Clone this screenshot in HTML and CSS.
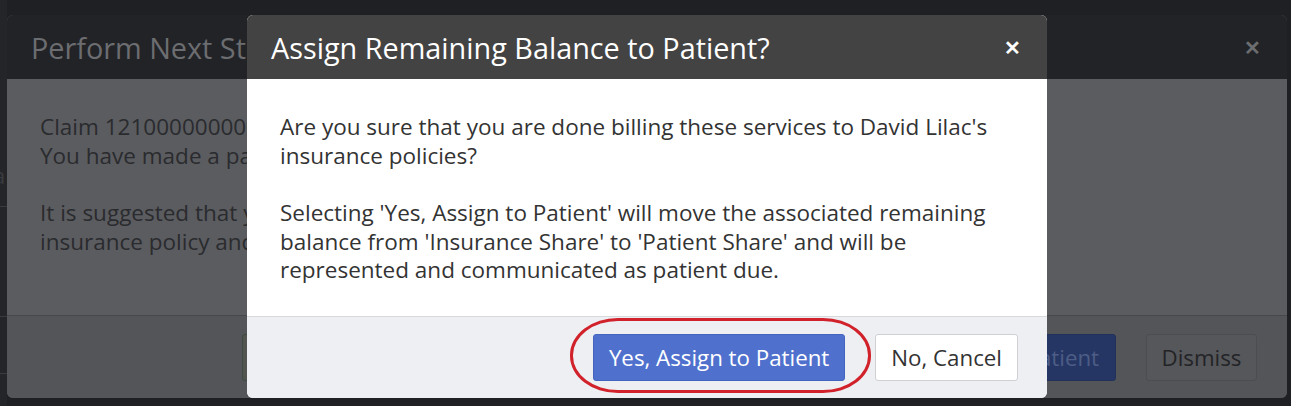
FILE: index.html
```html
<!DOCTYPE html>
<html lang="en">
<head>
<meta charset="utf-8">
<title>Assign Remaining Balance</title>
<link rel="stylesheet" href="styles.css">
</head>
<body>
<div class="page">
  <div class="page-strip">
    <span class="strip-a">a</span>
    <span class="strip-line l1"></span>
    <span class="strip-line l2"></span>
    <span class="strip-line l3"></span>
  </div>
  <div class="back-modal">
    <div class="back-header">
      <span class="back-title">Perform Next Step</span>
      <span class="back-close">&#x2715;</span>
    </div>
    <div class="back-body">
      <p>Claim 121000000000 has been processed.<br>You have made a payment posting on this claim.</p>
      <p>It is suggested that you bill the remaining balance to David Lilac's next<br>insurance policy and assign anything else to patient.</p>
    </div>
    <div class="back-footer">
      <button class="back-btn back-btn-left">Bill Next Insurance</button>
      <span class="spacer"></span>
      <button class="back-btn back-btn-primary">Assign to Patient</button>
      <button class="back-btn back-btn-default">Dismiss</button>
    </div>
  </div>

  <div class="modal">
    <div class="modal-header">
      <h1 class="modal-title">Assign Remaining Balance to Patient?</h1>
      <span class="modal-close">&#x2715;</span>
    </div>
    <div class="modal-body">
      <p>Are you sure that you are done billing these services to David Lilac's insurance policies?</p>
      <p>Selecting 'Yes, Assign to Patient' will move the associated remaining balance from 'Insurance Share' to 'Patient Share' and will be represented and communicated as patient due.</p>
    </div>
    <div class="modal-footer">
      <button class="btn btn-primary">Yes, Assign to Patient</button>
      <button class="btn btn-default">No, Cancel</button>
    </div>
  </div>

  <div class="annotation"></div>
</div>
</body>
</html>
```

FILE: styles.css
```css
* { box-sizing: border-box; }

html, body {
  margin: 0;
  padding: 0;
  background: #1f2023;
  font-family: "Open Sans", "Liberation Sans", sans-serif;
}

.page {
  position: relative;
  width: 1291px;
  height: 406px;
  overflow: hidden;
  display: flex;
  background: #1f2023;
}

.page-strip {
  position: relative;
  width: 7px;
  flex: none;
  background: #242528;
}
.strip-a {
  position: absolute;
  left: -7px;
  top: 160px;
  color: #3a3b3e;
  font-size: 22px;
}
.strip-line {
  position: absolute;
  left: 0;
  width: 7px;
  height: 1px;
  background: #3a3b3e;
}
.strip-line.l1 { top: 206px; }
.strip-line.l2 { top: 316px; }
.strip-line.l3 { top: 373px; }

/* background (dimmed) modal */
.back-modal {
  margin: 15px 4px 8px 0;
  flex: 1;
  display: flex;
  flex-direction: column;
  border-radius: 6px;
  overflow: hidden;
  background: #5b5c60;
}
.back-header {
  height: 64px;
  background: #222327;
  display: flex;
  align-items: center;
  padding: 0 26px 0 24px;
}
.back-title {
  flex: 1;
  font-size: 28.8px;
  color: #6c6d70;
  white-space: nowrap;
}
.back-close {
  font-size: 20px;
  font-weight: bold;
  color: #6c6d70;
}
.back-body {
  flex: 1;
  padding: 34px 33px 0;
  color: #2a2b2e;
  font-size: 22.5px;
  line-height: 28.5px;
}
.back-body p { margin: 0 0 29px; white-space: nowrap; }

.back-footer {
  height: 83px;
  border-top: 1px solid #47484b;
  background: #545558;
  display: flex;
  align-items: center;
  padding: 0 30px 0 235px;
  gap: 30px;
}
.spacer { flex: 1; }
.back-btn {
  height: 47px;
  font-family: inherit;
  font-size: 22.3px;
  padding: 0 16px;
  border-radius: 3px;
  border: 1px solid #4c4d50;
  background: #56575a;
  color: #232427;
}
.back-btn-default {
  padding: 0 14.5px;
}
.back-btn-left {
  border-color: #3e4a44;
  background: #52544f;
}
.back-btn-primary {
  background: #253664;
  border-color: #22315a;
  color: #4d5d86;
}

/* front modal */
.modal {
  position: absolute;
  left: 247px;
  top: 15px;
  width: 800px;
  height: 383px;
  border-radius: 6px;
  overflow: hidden;
  display: flex;
  flex-direction: column;
  background: #ffffff;
}
.modal-header {
  height: 64px;
  background: #434343;
  display: flex;
  align-items: center;
  padding: 0 26px 0 24px;
}
.modal-title {
  flex: 1;
  margin: 0;
  font-size: 28.8px;
  font-weight: normal;
  color: #ffffff;
  white-space: nowrap;
}
.modal-close {
  font-size: 20px;
  font-weight: bold;
  color: #ffffff;
}
.modal-body {
  flex: 1;
  padding: 34px 40px 0 33px;
  color: #333333;
  font-size: 22.5px;
  line-height: 28.5px;
}
.modal-body p { margin: 0 0 29px; }

.modal-footer {
  height: 82px;
  border-top: 1px solid #d8d9dc;
  background: #eeeff3;
  display: flex;
  align-items: center;
  justify-content: flex-end;
  gap: 30px;
  padding: 0 29px 0 0;
}
.btn {
  height: 47px;
  font-family: inherit;
  font-size: 22.3px;
  padding: 0 15px;
  border-radius: 3px;
  cursor: pointer;
}
.btn-primary {
  background: #4f71cd;
  border: 1px solid #4365bd;
  color: #ffffff;
}
.btn-default {
  background: #ffffff;
  border: 1px solid #cfd0d3;
  color: #333333;
}

.annotation {
  position: absolute;
  left: 570px;
  top: 318px;
  width: 301px;
  height: 75px;
  border: 3px solid #d1222b;
  border-radius: 48px / 37px;
  pointer-events: none;
}
```
